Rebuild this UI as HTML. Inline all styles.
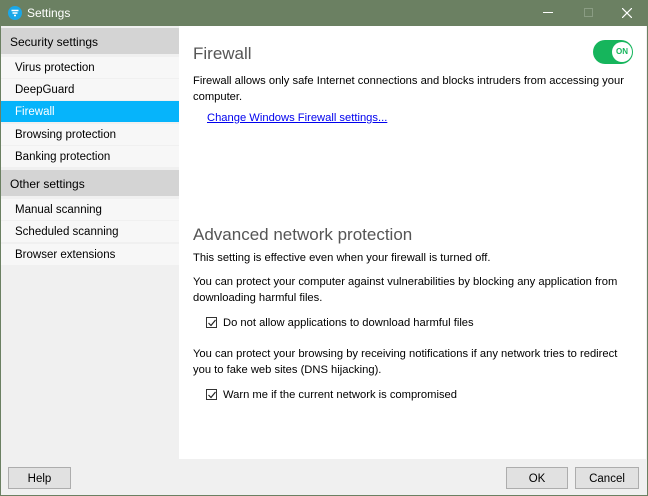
<!DOCTYPE html>
<html><head><meta charset="utf-8"><style>
*{margin:0;padding:0;box-sizing:border-box}
body{width:648px;height:496px;background:#6b8062;font-family:"Liberation Sans",sans-serif;font-size:11.2px;color:#000;position:relative;overflow:hidden}
.a{position:absolute;white-space:nowrap}
#title{left:0;top:0;width:648px;height:26px;background:#6b8062;color:#fff}
#win{left:1px;top:26px;width:646px;height:469px;background:#f0f0f0}
#side{left:1px;top:28px;width:178px;height:431px;background:#f0f0f0}
.hd{left:1px;width:178px;height:26px;background:#d4d4d4;font-size:12px;padding:7px 0 0 9px}
.it{left:1px;width:178px;height:21px;background:#f7f7f7;padding:5px 0 0 14px;font-size:11.5px}
.sel{background:#06b4fb;color:#fff}
#main{left:179px;top:26px;width:467px;height:433px;background:#fff}
.btn{height:22px;background:#e1e1e1;border:1px solid #adadad;text-align:center;padding-top:5px;font-size:11.5px}
.cb{width:11px;height:11px;border:1px solid #333;background:#fff}
</style></head><body>
<div class="a" id="title">
 <svg class="a" style="left:8px;top:6px" width="14" height="14" viewBox="0 0 14 14"><circle cx="7" cy="7" r="7" fill="#1ba7e8"/><path d="M3.5 4.5h7M4.5 7h5M6 9.5h2" stroke="#fff" stroke-width="1.5"/></svg>
 <div class="a" style="left:27px;top:6px;font-size:12px">Settings</div>
 <div class="a" style="left:543px;top:12px;width:10px;height:1px;background:#fff"></div>
 <div class="a" style="left:584px;top:8px;width:9px;height:9px;border:1px solid #8a9c83"></div>
 <svg class="a" style="left:622px;top:8px" width="10" height="10"><path d="M0 0L10 10M10 0L0 10" stroke="#fff" stroke-width="1.2"/></svg>
</div>
<div class="a" id="win"></div>
<div class="a" id="side"></div>
<div class="a hd" style="top:28px">Security settings</div>
<div class="a it" style="top:57px">Virus protection</div>
<div class="a it" style="top:79px">DeepGuard</div>
<div class="a it sel" style="top:101px">Firewall</div>
<div class="a it" style="top:124px">Browsing protection</div>
<div class="a it" style="top:146px">Banking protection</div>
<div class="a hd" style="top:170px">Other settings</div>
<div class="a it" style="top:199px">Manual scanning</div>
<div class="a it" style="top:221px">Scheduled scanning</div>
<div class="a it" style="top:244px">Browser extensions</div>
<div class="a" id="main"></div>
<div class="a" style="left:193px;top:44px;font-size:17px;color:#555">Firewall</div>
<div class="a" style="left:593px;top:40px;width:40px;height:24px;border-radius:12px;background:#16b55c"></div>
<div class="a" style="left:612px;top:42px;width:20px;height:20px;border-radius:10px;background:#fff;color:#16b55c;font-size:8px;font-weight:bold;text-align:center;padding-top:5px">ON</div>
<div class="a" style="left:193px;top:73px;line-height:16px">Firewall allows only safe Internet connections and blocks intruders from accessing your<br>computer.</div>
<div class="a" style="left:207px;top:112px;color:#0000ee;text-decoration:underline">Change Windows Firewall settings...</div>
<div class="a" style="left:193px;top:225px;font-size:17px;color:#555">Advanced network protection</div>
<div class="a" style="left:193px;top:252px">This setting is effective even when your firewall is turned off.</div>
<div class="a" style="left:193px;top:274px;line-height:16px">You can protect your computer against vulnerabilities by blocking any application from<br>downloading harmful files.</div>
<div class="a cb" style="left:206px;top:317px"></div>
<svg class="a" style="left:207px;top:318px" width="10" height="10"><path d="M1.5 5L4 7.5L8.5 2" stroke="#222" stroke-width="1.2" fill="none"/></svg>
<div class="a" style="left:223px;top:317px">Do not allow applications to download harmful files</div>
<div class="a" style="left:193px;top:346px;line-height:16px">You can protect your browsing by receiving notifications if any network tries to redirect<br>you to fake web sites (DNS hijacking).</div>
<div class="a cb" style="left:206px;top:389px"></div>
<svg class="a" style="left:207px;top:390px" width="10" height="10"><path d="M1.5 5L4 7.5L8.5 2" stroke="#222" stroke-width="1.2" fill="none"/></svg>
<div class="a" style="left:223px;top:389px">Warn me if the current network is compromised</div>
<div class="a btn" style="left:8px;top:467px;width:63px">Help</div>
<div class="a btn" style="left:506px;top:467px;width:62px">OK</div>
<div class="a btn" style="left:575px;top:467px;width:64px">Cancel</div>
</body></html>
